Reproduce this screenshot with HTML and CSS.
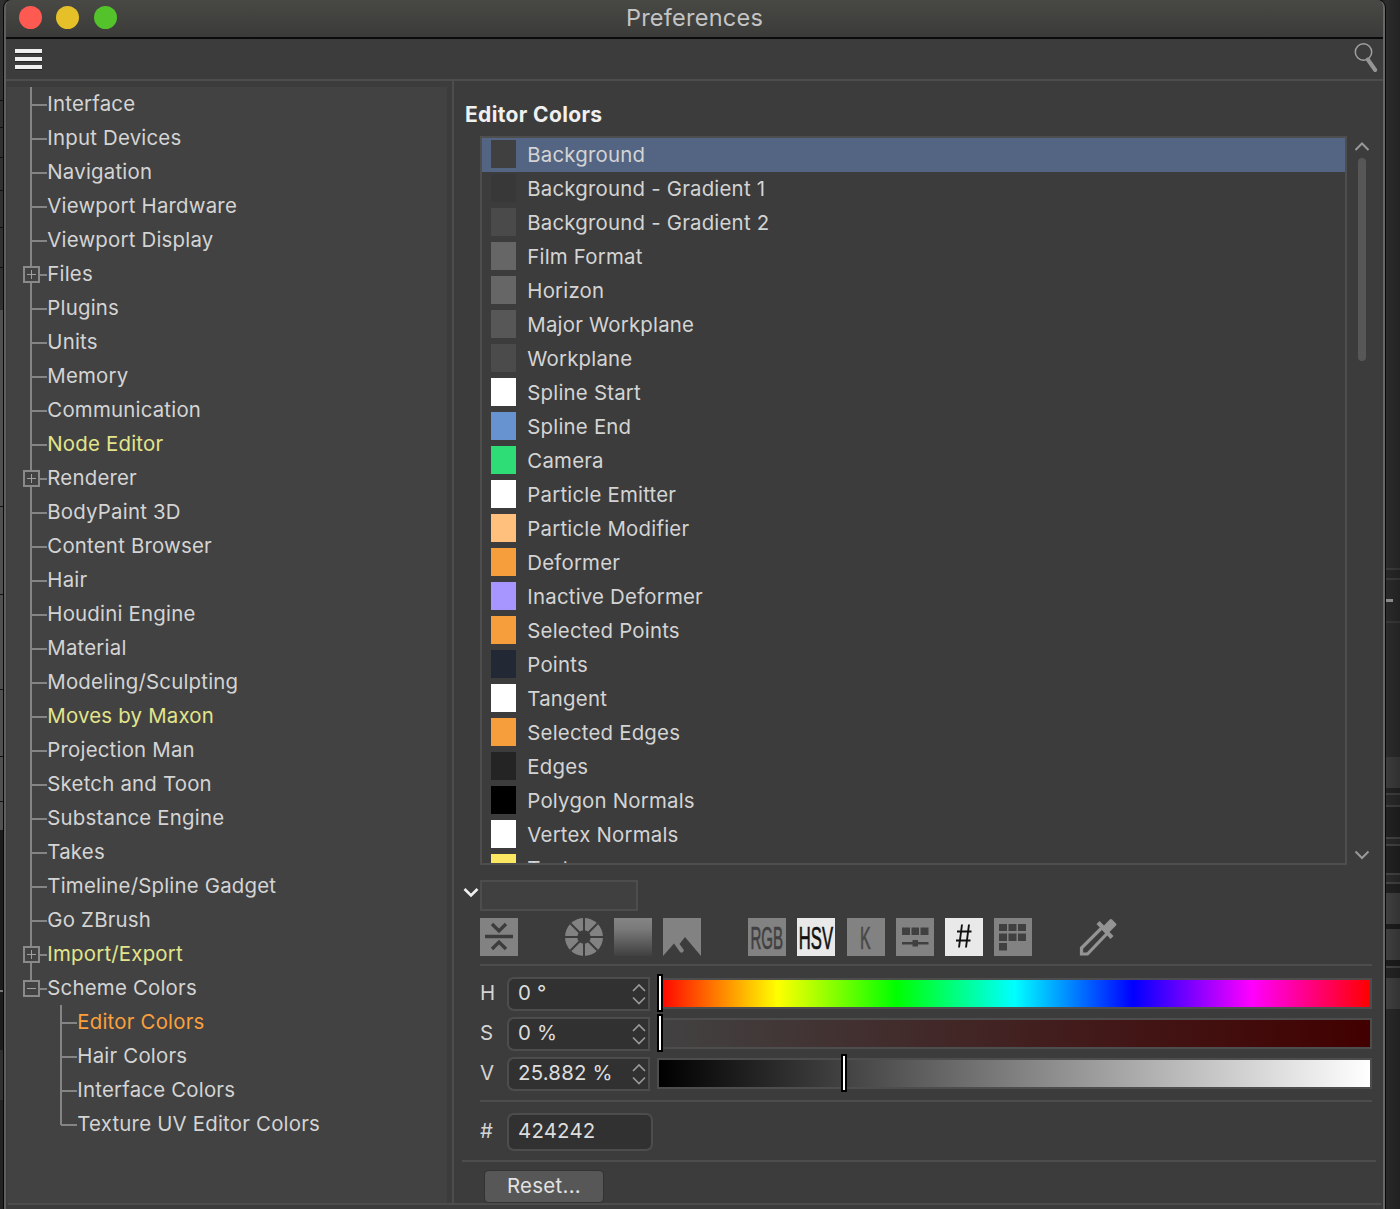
FILE: index.html
```html
<!DOCTYPE html>
<html lang="en">
<head>
<meta charset="utf-8">
<title>Preferences</title>
<link rel="stylesheet" href="styles.css">
</head>
<body>
<div class="desktop">
<div class="strip-left"></div>
<main class="window">
  <header class="titlebar">
    <div class="lights"><i class="red"></i><i class="yellow"></i><i class="green"></i></div>
    <h1>Preferences</h1>
  </header>
  <div class="toolbar">
    <div class="burger"><i></i><i></i><i></i></div>
    <svg class="search" width="26" height="32" viewBox="0 0 26 32"><circle cx="10.5" cy="11" r="8.2" fill="none" stroke="#a0a0a0" stroke-width="1.5"/><path d="M14.8 18.5L22.2 29" stroke="#969696" stroke-width="4" stroke-linecap="round"/></svg>
  </div>
  <div class="content">
    <nav class="sidebar">
      <ul class="tree">
        <li>Interface</li><li>Input Devices</li><li>Navigation</li><li>Viewport Hardware</li><li>Viewport Display</li>
        <li class="plus">Files</li><li>Plugins</li><li>Units</li><li>Memory</li><li>Communication</li>
        <li class="changed">Node Editor</li><li class="plus">Renderer</li><li>BodyPaint 3D</li><li>Content Browser</li><li>Hair</li>
        <li>Houdini Engine</li><li>Material</li><li>Modeling/Sculpting</li><li class="changed">Moves by Maxon</li><li>Projection Man</li>
        <li>Sketch and Toon</li><li>Substance Engine</li><li>Takes</li><li>Timeline/Spline Gadget</li><li>Go ZBrush</li>
        <li class="plus changed">Import/Export</li><li class="plus minus">Scheme Colors</li>
      </ul>
      <ul class="tree subtree">
        <li class="current">Editor Colors</li><li>Hair Colors</li><li>Interface Colors</li><li>Texture UV Editor Colors</li>
      </ul>
    </nav>
    <section class="panel">
      <h2>Editor Colors</h2>
      <div class="list-area">
        <ul class="colors">
          <li class="selected"><i class="c-bg"></i>Background</li>
          <li><i class="c-g1"></i>Background - Gradient 1</li>
          <li><i class="c-g2"></i>Background - Gradient 2</li>
          <li><i class="c-film"></i>Film Format</li>
          <li><i class="c-film"></i>Horizon</li>
          <li><i class="c-major"></i>Major Workplane</li>
          <li><i class="c-work"></i>Workplane</li>
          <li><i class="c-white"></i>Spline Start</li>
          <li><i class="c-blue"></i>Spline End</li>
          <li><i class="c-green"></i>Camera</li>
          <li><i class="c-white"></i>Particle Emitter</li>
          <li><i class="c-peach"></i>Particle Modifier</li>
          <li><i class="c-orange"></i>Deformer</li>
          <li><i class="c-violet"></i>Inactive Deformer</li>
          <li><i class="c-orange"></i>Selected Points</li>
          <li><i class="c-navy"></i>Points</li>
          <li><i class="c-white"></i>Tangent</li>
          <li><i class="c-orange"></i>Selected Edges</li>
          <li><i class="c-edge"></i>Edges</li>
          <li><i class="c-black"></i>Polygon Normals</li>
          <li><i class="c-white"></i>Vertex Normals</li>
          <li><i class="c-yellow"></i>Texture</li>
        </ul>
        <div class="scroll">
          <svg width="16" height="10" viewBox="0 0 16 10"><path d="M1.500 8L8 1.500L14.500 8"/></svg>
          <div class="thumb"></div>
          <svg width="16" height="10" viewBox="0 0 16 10"><path d="M1.500 1.500L8 8L14.500 1.500"/></svg>
        </div>
      </div>
      <div class="preview">
        <svg width="16" height="11" viewBox="0 0 16 11"><path d="M1.500 2L8 8.500L14.500 2" fill="none" stroke="#f0f0f0" stroke-width="2.6"/></svg>
        <div class="preview-box"></div>
      </div>
      <div class="modes">
        <svg width="38" height="38"><path class="tile" d="M0 0h38v38H0z"/><path class="ink" stroke-width="3.300" d="M5 18.5h28M12 6l7 7l7-7M12 31l7-7l7 7"/></svg>
        <svg class="group" width="38" height="38"><circle class="tile" cx="19" cy="19" r="19"/><circle cx="19" cy="19" r="6.7" fill="#3c3c3c"/><path class="ink" stroke-width="2" d="M19 0v38M0 19h38M5.5 5.5l27 27M32.500 5.500l-27 27"/></svg>
        <svg width="38" height="38"><defs><linearGradient id="fade" x2="0" y2="1"><stop stop-color="#858585"/><stop offset=".3" stop-color="#797979"/><stop offset="1" stop-color="#404040"/></linearGradient></defs><path fill="url(#fade)" d="M0 0h38v38H0z"/></svg>
        <svg width="38" height="38"><path class="tile" d="M0 0h38v38H0z"/><path fill="#3c3c3c" d="M0 38L11 25.500l6 8.500q1.500 1.500 3 0t.5-2.500l-4-5.500L22 19l16 19z"/></svg>
        <svg class="group" width="38" height="38"><path class="tile" d="M0 0h38v38H0z"/><text transform="translate(2.500 30.500) scale(.47 1)" fill="#404040" stroke="#404040">RGB</text></svg>
        <svg width="38" height="38"><path fill="#e9e9e9" d="M0 0h38v38H0z"/><text transform="translate(1.800 30.500) scale(.52 1)" fill="#111" stroke="#111">HSV</text></svg>
        <svg width="38" height="38"><path class="tile" d="M0 0h38v38H0z"/><text transform="translate(13 30.500) scale(.5 1)" fill="#484848" stroke="#484848">K</text></svg>
        <svg width="38" height="38"><path class="tile" d="M0 0h38v38H0z"/><path fill="#404040" d="M6 9.500h8v7.500H6zM15.500 9.500h7.500v7.500h-7.500zM24.500 9.500h8v7.500h-8zM6 24h10.500v-2h5.500v2h10.500v2.500H22v2h-5.500v-2H6z"/></svg>
        <svg width="38" height="38"><path fill="#e9e9e9" d="M0 0h38v38H0z"/><path fill="none" stroke="#111" stroke-width="1.9" d="M17 6.500l-3 23M24 6.500l-3 23M12 13.500h14.500M11 22.500h14.500"/></svg>
        <svg width="38" height="38"><path class="tile" d="M0 0h38v38H0z"/><path fill="#404040" d="M5 6h8v7H5zM14.500 6h8v7h-8zM24 6h8v7h-8zM5 15.500h8v7.500H5zM14.500 15.500h8v7.500h-8zM24 15.500h8v7.500h-8zM5 25h8v7.500H5z"/></svg>
        <svg class="group" width="38" height="38"><path d="M2.500 36v-6L23 9.500l5.500 5.500L8.500 36z" fill="none" stroke="#949494" stroke-width="3.200"/><path fill="#949494" d="M17.500 6l3-3l4.500 4.500L31 1.300Q32 .5 33 1.500l4 4Q38 6.500 37 7.500l-6.500 6.500l4 4l-3 3z"/></svg>
      </div>
      <hr class="rule">
      <div class="channels">
        <label>H</label><div class="field">0 °<svg width="14" height="22"><path d="M1 8l6-6l6 6M1 14.500l6 6l6-6"/></svg></div><div class="slider hue"><b></b></div>
        <label>S</label><div class="field">0 %<svg width="14" height="22"><path d="M1 8l6-6l6 6M1 14.500l6 6l6-6"/></svg></div><div class="slider sat"><b></b></div>
        <label>V</label><div class="field">25.882 %<svg width="14" height="22"><path d="M1 8l6-6l6 6M1 14.500l6 6l6-6"/></svg></div><div class="slider val"><b></b></div>
      </div>
      <hr class="rule">
      <div class="hex"><label>#</label><div class="field">424242</div></div>
      <hr class="rule wide">
      <button class="reset">Reset...</button>
    </section>
  </div>
  <footer class="bottom"></footer>
</main>
<div class="strip-right"></div>
</div>
</body>
</html>
```
FILE: styles.css
```css
*, *::before, *::after { box-sizing: border-box; }
body { margin: 0; background: #292929; font: 440 20.4px/34px Inter, "Liberation Sans", sans-serif; letter-spacing: .21px; color: #d4d4d4; }
ul { list-style: none; margin: 0; padding: 0; }
h1, h2 { margin: 0; }
i { display: block; }
svg { display: block; flex: none; }

.desktop { display: grid; grid-template-columns: 4px 1381px 15px; height: 1209px; overflow: hidden; }
.strip-left { background:
  linear-gradient(#111, #111) 0 100px/4px 1px, linear-gradient(#111, #111) 0 127px/4px 1px,
  linear-gradient(#111, #111) 0 157px/4px 1px, linear-gradient(#111, #111) 0 190px/4px 1px,
  linear-gradient(#111, #111) 0 227px/4px 1px, linear-gradient(#111, #111) 0 267px/4px 1px,
  linear-gradient(#111, #111) 0 506px/4px 1px, linear-gradient(#111, #111) 0 594px/4px 1px,
  linear-gradient(#111, #111) 0 689px/4px 1px, linear-gradient(#111, #111) 0 756px/4px 1px,
  linear-gradient(#111, #111) 0 801px/4px 1px, linear-gradient(#777, #777) 0 990px/4px 2px,
  linear-gradient(#303030 0 310px, #505050 310px 830px, #1c1c1c 830px 1050px, #303030 1050px 1100px, #232323 1100px);
  background-repeat: no-repeat; }
.strip-right { background:
  linear-gradient(#8a8a8a, #8a8a8a) 0 599px/8px 3px no-repeat,
  linear-gradient(90deg, transparent, #0003),
  linear-gradient(#2c2c2c 0 568px, #3c3c3c 568px 570px, #282828 570px 578px, #3c3c3c 578px 580px, #2a2a2a 580px 621px, #3a3a3a 621px 623px, #2c2c2c 623px 757px, #3c3c3c 757px 788px, #242424 788px 793px, #404040 793px 795px, #2a2a2a 795px 805px, #404040 805px 807px, #222 807px 837px, #444 837px 839px, #2a2a2a 839px 844px, #444 844px 846px, #222 846px 873px, #444 873px 875px, #2c2c2c 875px 882px, #444 882px 884px, #222 884px 893px, #404040 893px 924px, #1d1d1d 924px 929px, #404040 929px 960px, #1d1d1d 960px 966px, #444 966px 968px, #242424 968px 978px, #404040 978px 1009px, #292929 1009px); }

.window { position: relative; display: flex; flex-direction: column; height: 1209px; background: #3c3c3c; border: solid #676767; border-width: 0 2px; border-left-color: #5f5f5f; border-radius: 8px 8px 0 0; box-shadow: 0 0 0 1px #080808; overflow: hidden; }
.titlebar { height: 39px; flex: none; background: linear-gradient(#484845, #3b3b39); border-bottom: 2px solid #0b0b0b; display: grid; grid-template-columns: 112px 1fr 112px; }
.lights { display: flex; gap: 14.800px; padding: 5.500px 0 0 12.500px; }
.lights i { flex: none; width: 23px; height: 23px; border-radius: 50%; }
.red { background: #ff5a52; } .yellow { background: #e6c029; } .green { background: #53c22b; }
h1 { font-size: 23.5px; font-weight: 400; line-height: 36px; letter-spacing: .25px; text-align: center; color: #c4c4c4; }
.toolbar { height: 42px; flex: none; display: flex; justify-content: space-between; padding: 2px 4px 0 9px; border-bottom: 2px solid #4d4d4d; }
.burger { padding-top: 8px; display: flex; flex-direction: column; gap: 4px; }
.burger i { width: 27px; height: 4px; background: #eee; box-shadow: 0 1px #222; }
.content { display: flex; height: 1122px; flex: none; }
.sidebar { width: 440px; margin: 6px 0 0 1px; padding-left: 23px; background: #424242; flex: none; }

.tree { position: relative; margin-top: -1px; }
.tree::before { content: ""; position: absolute; left: 0; top: 1px; bottom: 16px; width: 2px; background: #858585; }
.tree li { position: relative; height: 34px; line-height: 35px; padding-left: 17.300px; white-space: nowrap; }
.tree li::before { content: ""; position: absolute; left: 1px; top: 18px; width: 16px; height: 2px; background: #858585; }
.tree .plus::after { content: ""; position: absolute; left: -7px; top: 10px; width: 17px; height: 17px; border: 2px solid #8a8a8a;
  background: linear-gradient(#a0a0a0, #a0a0a0) center/9px 1px no-repeat, linear-gradient(#a0a0a0, #a0a0a0) center/1px 9px no-repeat, #424242; }
.tree .minus::after { background: linear-gradient(#a0a0a0, #a0a0a0) center/9px 1px no-repeat, #424242; }
.subtree { margin: 0 0 0 30px; }
.subtree::before { bottom: 15px; }
.tree .changed { color: #e2e58b; }
.tree .current { color: #faa03c; }

.panel { flex: 1; margin-left: 5px; border-left: 2px solid #4d4d4d; padding: 17px 7px 0 8px; min-width: 0; }
h2 { font-size: 21px; font-weight: 700; line-height: 33px; letter-spacing: .35px; color: #f0f0f0; padding-left: 3px; height: 38px; }
.list-area { display: flex; margin-left: 18px; }
.colors { width: 867px; height: 729px; border: 2px solid #4e4e4e; overflow: hidden; flex: none; }
.colors li { height: 34px; line-height: 33px; display: flex; gap: 11.300px; padding-left: 9px; }
.colors i { width: 25px; height: 28px; margin-top: 2px; flex: none; }
.selected { background: #536582; }
.c-bg { background: #404040; } .c-g1 { background: #383838; } .c-g2 { background: #4a4a4a; }
.c-film { background: #666; } .c-major { background: #575757; } .c-work { background: #4b4b4b; }
.c-white { background: #fff; } .c-blue { background: #6793d0; } .c-green { background: #2fdd77; }
.c-peach { background: #ffbf7d; } .c-orange { background: #f69d3c; } .c-violet { background: #a796ff; }
.c-navy { background: #222934; } .c-edge { background: #242424; } .c-black { background: #000; } .c-yellow { background: #fce763; }
.scroll { width: 16px; margin-left: 7px; display: flex; flex-direction: column; align-items: center; justify-content: space-between; padding: 6px 0 5px; }
.scroll path { fill: none; stroke: #999; stroke-width: 2; }
.thumb { width: 8px; height: 203px; border-radius: 4px; background: #575757; margin: 6px 0 auto; }

.preview { display: flex; padding-top: 15px; height: 53px; }
.preview svg { margin: 7px 1px 0 1px; }
.preview-box { width: 158px; height: 31px; border: 2px solid #4d4d4d; background: #404040; }
.modes { display: flex; gap: 11.200px; margin-left: 18px; height: 38px; }
.tile { fill: #828282; }
.ink { fill: none; stroke: #3c3c3c; }
.modes text { font: 32px "Liberation Sans", sans-serif; letter-spacing: 0; stroke-width: .7px; }
.group { margin-left: 35.700px; }
.rule { border: 0; height: 2px; background: #4d4d4d; margin: 8px 4px 0 18px; }
.channels { display: grid; grid-template-columns: 27px 143px 722px; grid-auto-rows: 34px; row-gap: 6px; margin: 11px 0 0 18px; }
.field { display: flex; justify-content: space-between; width: 143px; height: 34px; line-height: 28px; padding-left: 9px; border: 2px solid #4d4d4d; border-radius: 7px 0 0 7px; background: #313131; color: #ddd; }
.field svg { margin: 4px 2px 0 0; }
.field path { fill: none; stroke: #999; stroke-width: 1.700; }
label { line-height: 32px; }
.slider { position: relative; width: 715px; height: 31px; margin: 1px 0 0 7px; border: 2px solid #4d4d4d; background-origin: padding-box; }
.hue { background-image: linear-gradient(90deg, red, #ff0 16.67%, #0f0 33.33%, #0ff 50%, #00f 66.67%, #f0f 83.33%, red); }
.sat { background-image: linear-gradient(90deg, #424242, #420000); }
.val { background-image: linear-gradient(90deg, #000, #fff); }
.slider b { position: absolute; left: -2px; top: -6px; width: 6px; height: 38px; border: 2px solid #000; background: #fff; }
.val b { left: 182px; }
.channels + .rule { margin-top: 9px; }
.hex { display: flex; margin: 11px 0 0 18px; }
.hex label { width: 27px; line-height: 36px; }
.hex .field { width: 146px; height: 38px; line-height: 32px; border-radius: 7px; }
.rule.wide { margin: 9px 0 0 0; }
.reset { display: block; width: 118px; height: 31px; margin: 9px 0 0 23px; border: 0; border-radius: 4px; background: #575757; box-shadow: 0 0 0 1px #333; color: #e2e2e2; font: inherit; line-height: 28px; letter-spacing: .3px; padding: 0 0 1px; }
.bottom { height: 2px; flex: none; background: #4d4d4d; margin: 0 2px; }
```
